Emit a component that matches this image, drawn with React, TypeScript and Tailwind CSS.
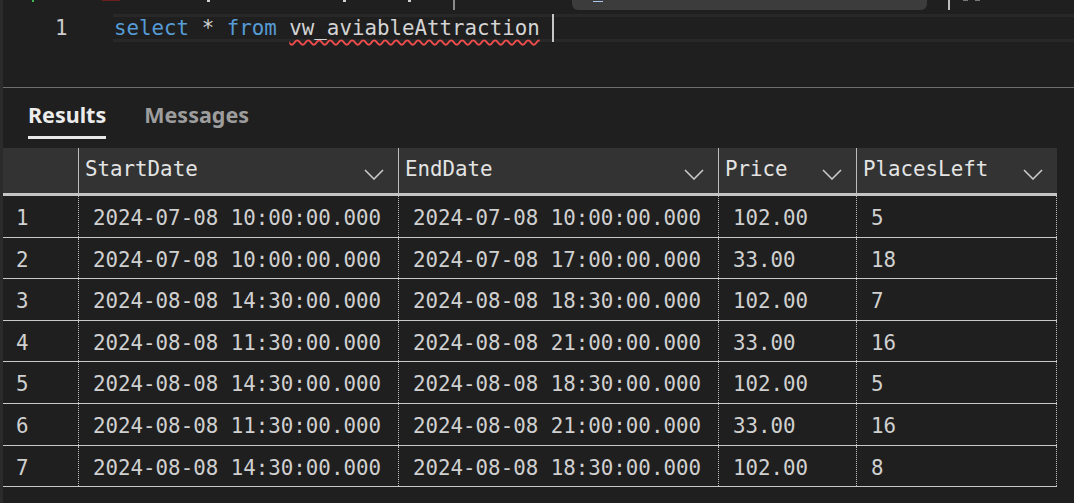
type Row = {
	startDate: string;
	endDate: string;
	price: string;
	placesLeft: string;
	height: string;
};

const rows: Row[] = [
	{ startDate: "2024-07-08 10:00:00.000", endDate: "2024-07-08 10:00:00.000", price: "102.00", placesLeft: "5", height: "h-[42px]" },
	{ startDate: "2024-07-08 10:00:00.000", endDate: "2024-07-08 17:00:00.000", price: "33.00", placesLeft: "18", height: "h-[41px]" },
	{ startDate: "2024-08-08 14:30:00.000", endDate: "2024-08-08 18:30:00.000", price: "102.00", placesLeft: "7", height: "h-[42px]" },
	{ startDate: "2024-08-08 11:30:00.000", endDate: "2024-08-08 21:00:00.000", price: "33.00", placesLeft: "16", height: "h-[41px]" },
	{ startDate: "2024-08-08 14:30:00.000", endDate: "2024-08-08 18:30:00.000", price: "102.00", placesLeft: "5", height: "h-[42px]" },
	{ startDate: "2024-08-08 11:30:00.000", endDate: "2024-08-08 21:00:00.000", price: "33.00", placesLeft: "16", height: "h-[42px]" },
	{ startDate: "2024-08-08 14:30:00.000", endDate: "2024-08-08 18:30:00.000", price: "102.00", placesLeft: "8", height: "h-[41px]" },
];

const columns = [
	{ name: "StartDate", width: "w-[320px]" },
	{ name: "EndDate", width: "w-[320px]" },
	{ name: "Price", width: "w-[138px]" },
	{ name: "PlacesLeft", width: "w-[201px]" },
];

const mono = "font-['DejaVu_Sans_Mono',monospace] text-[20.8px]";

const Chevron = () => (
	<svg width="20" height="11" viewBox="0 0 20 11" className="mt-[9px] shrink-0">
		<polyline points="1,1 10,10 19,1" fill="none" stroke="#c8c8c8" strokeWidth="1.6" />
	</svg>
);

const Toolbar = () => (
	<div className="flex h-[14px] items-start">
		<div className="ml-[29px] h-[2px] w-[2px] bg-[#3fb950]" />
		<div className="ml-[68px] h-[1px] w-[18px] bg-[#6b2020]" />
		<div className="ml-[87px] h-[2px] w-[3px] bg-[#d0d0d0]" />
		<div className="ml-[133px] h-[2px] w-[3px] bg-[#d0d0d0]" />
		<div className="ml-[62px] h-[2px] w-[3px] bg-[#d0d0d0]" />
		<div className="ml-[42px] h-[10px] w-[2px] bg-[#8a8a8a]" />
		<div className="ml-[117px] h-[10px] w-[355px] rounded-b-[6px] bg-[#3c3c3c]">
			<div className="ml-[21px] mt-[1px] h-[1px] w-[10px] bg-[#a9c7e8]" />
		</div>
		<div className="ml-[21px] h-[10px] w-[2px] bg-[#bdbdbd]" />
		<div className="ml-[13px] h-[1px] w-[5px] bg-[#777777]" />
		<div className="ml-[7px] h-[1px] w-[5px] bg-[#777777]" />
	</div>
);

const Editor = () => (
	<div className={`flex h-[28px] ${mono}`}>
		<div className="flex w-[110px] items-center pl-[52px] pt-[2px] text-[#cccccc]">1</div>
		<div className="flex flex-1 items-center border-y-[3px] border-[#282828] pl-[1px] pt-[2px] whitespace-pre">
			<span className="text-[#569cd6]">select</span>
			<span className="text-[#d4d4d4]"> * </span>
			<span className="text-[#569cd6]">from</span>
			<span className="text-[#d4d4d4]"> </span>
			<span className="text-[#d4d4d4] underline decoration-[#f14c4c] decoration-wavy decoration-[1.5px] underline-offset-[4px]">
				vw_aviableAttraction
			</span>
			<span className="text-[#d4d4d4]"> </span>
			<div className="-mb-[3px] -mt-[5px] h-[28px] w-[2px] bg-[#c6c6c6]" />
		</div>
	</div>
);

const Tabs = () => (
	<div className="flex h-[60px] gap-[38px] pl-[25px] pt-[12px] font-['Noto_Sans',sans-serif] text-[21.5px] font-bold">
		<div className="flex flex-col">
			<span className="leading-[29px] text-[#ececec]">Results</span>
			<div className="mt-[7px] h-[3px] bg-[#e8e8e8]" />
		</div>
		<span className="leading-[29px] text-[#9d9d9d]">Messages</span>
	</div>
);

const Grid = () => (
	<div className={`flex w-[1054px] flex-col ${mono}`}>
		<div className="flex h-[48px] border-b-[3px] border-[#c4c4c4] bg-[#333333] text-[#e4e4e4]">
			<div className="w-[75px]" />
			{columns.map((col) => (
				<div
					key={col.name}
					className={`flex ${col.width} items-center justify-between border-l border-[#bdbdbd] pb-[1px] pl-[6px] pr-[14px]`}
				>
					<span>{col.name}</span>
					<Chevron />
				</div>
			))}
		</div>
		{rows.map((row, i) => (
			<div
				key={i}
				className={`flex ${row.height} border-b border-[#c8c8c8] text-[#d0d0d0]`}
			>
				<div className="flex w-[75px] items-center pl-[13px] pt-[5px]">{i + 1}</div>
				<div className="flex w-[320px] items-center border-l border-dotted border-[#bdbdbd] pl-[14px] pt-[5px]">
					{row.startDate}
				</div>
				<div className="flex w-[320px] items-center border-l border-dotted border-[#bdbdbd] pl-[14px] pt-[5px]">
					{row.endDate}
				</div>
				<div className="flex w-[138px] items-center border-l border-dotted border-[#bdbdbd] pl-[14px] pt-[5px]">
					{row.price}
				</div>
				<div className="flex w-[201px] items-center border-x border-dotted border-[#bdbdbd] pl-[14px] pt-[5px]">
					{row.placesLeft}
				</div>
			</div>
		))}
	</div>
);

export default function App() {
	return (
		<div className="flex h-[503px] w-[1074px] flex-col overflow-hidden border-l-[3px] border-[#2b2b2b] bg-[#1f1f1f]">
			<Toolbar />
			<Editor />
			<div className="h-[45px]" />
			<div className="h-[1px] bg-[#6e6e6e]" />
			<Tabs />
			<Grid />
		</div>
	);
}
